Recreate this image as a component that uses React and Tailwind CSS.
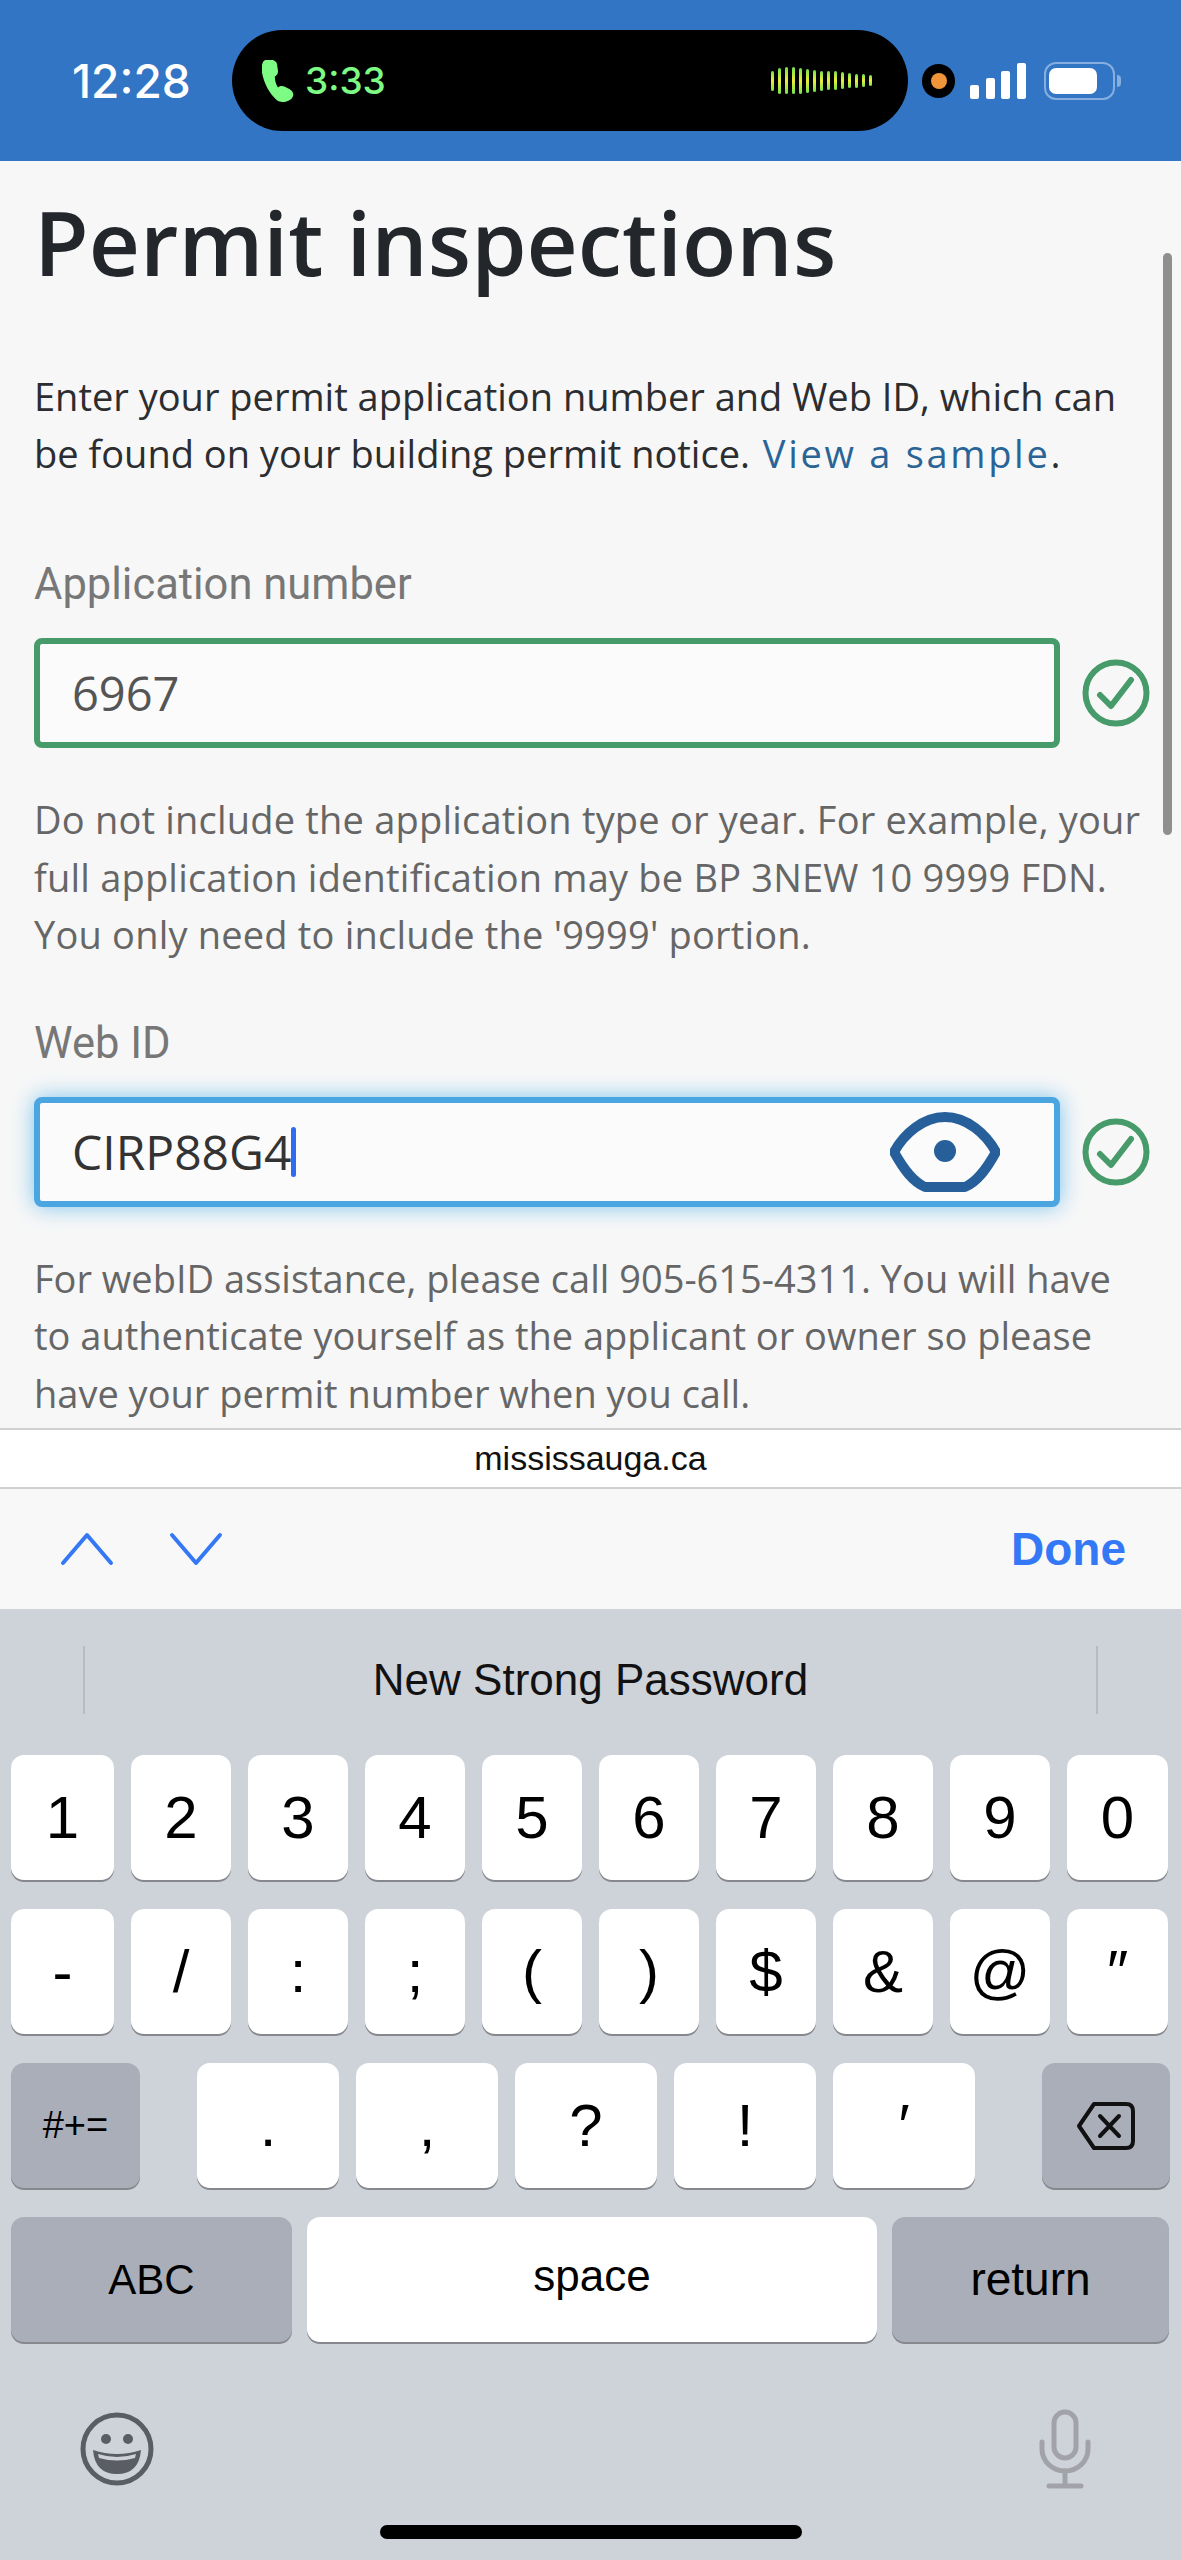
const Check = () => (
  <svg width="68" height="68" viewBox="0 0 68 68" fill="none" className="shrink-0">
    <circle cx="34" cy="34" r="30.5" stroke="#479a69" strokeWidth="6" />
    <path d="M18 36 L29 47 L49 21" stroke="#479a69" strokeWidth="6" strokeLinecap="round" strokeLinejoin="round" />
  </svg>
);

const Eye = () => (
  <svg width="110" height="80" viewBox="0 0 110 80" fill="none">
    <path d="M4 40 C14 22 33 5 55 5 C77 5 96 22 106 40 C96 58 87 70 75 75 L35 75 C23 70 14 58 4 40 Z" stroke="#265f9a" strokeWidth="10" strokeLinejoin="round" />
    <circle cx="55" cy="39" r="11" fill="#265f9a" />
  </svg>
);

const Wave = () => {
  const hs = [20, 26, 27, 27, 26, 24, 22, 20, 19, 19, 17, 15, 14, 13, 11];
  return (
    <div className="flex items-center gap-[3.5px]">
      {hs.map((h, i) => (
        <div key={i} className="w-[3.5px] rounded-full bg-gradient-to-b from-[#6fe04a] via-[#e6ee3a] to-[#6fe04a]" style={{ height: h }} />
      ))}
    </div>
  );
};

const StatusBar = () => (
  <div className="flex h-[161px] items-center bg-[#3375c5] pl-[72px] font-['Inter',sans-serif]">
    <span className="w-[160px] text-[46px] font-medium leading-none text-white">12:28</span>
    <div className="flex h-[101px] w-[676px] items-center rounded-full bg-black pl-[30px] pr-[36px]">
      <svg width="32" height="42" viewBox="0 0 30 46" preserveAspectRatio="none" className="mr-[11px]">
        <path d="M3 0 C0 2 -1 7 0 14 C2 26 7 37 14 44 C18 47 24 47 28 42 C30 39 30 35 26 32 L21 29 C19 28 17 28 15 30 C13 27 12 22 12 18 C14 17 15 15 15 12 L14 4 C13 0 7 -2 3 0 Z" fill="#7efb84" />
      </svg>
      <span className="text-[37px] font-medium leading-none text-[#7efb84]">3:33</span>
      <div className="ml-auto"><Wave /></div>
    </div>
    <div className="ml-[14px] flex h-[34px] w-[33px] items-center justify-center rounded-full bg-black">
      <div className="h-[16px] w-[16px] rounded-full bg-[#f0953a]" />
    </div>
    <div className="ml-[15px] flex items-end gap-[6.5px]">
      <div className="h-[14px] w-[9px] rounded-[2px] bg-white" />
      <div className="h-[21px] w-[9px] rounded-[2px] bg-white" />
      <div className="h-[28px] w-[9px] rounded-[2px] bg-white" />
      <div className="h-[36px] w-[9px] rounded-[2px] bg-white" />
    </div>
    <div className="ml-[18px] flex items-center">
      <div className="flex h-[38px] w-[71px] items-center rounded-[12px] border-2 border-[#86aede] p-[3px]">
        <div className="h-[26px] w-[48px] rounded-[7px] bg-white" />
      </div>
      <div className="ml-[2px] h-[12px] w-[4px] rounded-r-full bg-[#86aede]" />
    </div>
  </div>
);

const Help = ({ children, className = '' }) => (
  <p className={`mt-[43px] whitespace-nowrap text-[38px] leading-[57.5px] text-[#666666] ${className}`}>{children}</p>
);

const Label = ({ children, className = '' }) => (
  <div className={`h-[50px] font-['Roboto',sans-serif] text-[43.5px] leading-[50px] text-[#777777] ${className}`}>{children}</div>
);

const Main = () => (
  <div className="relative h-[1267px] overflow-hidden bg-[#f7f7f7] pl-[34px] pr-[20px] pt-[21px] font-['Open_Sans',sans-serif]">
    <h1 className="h-[120px] text-[89px] font-semibold leading-[120px] text-[#23272b]">Permit inspections</h1>
    <p className="mt-[66px] whitespace-nowrap text-[38px] leading-[57px] text-[#2b2d30]">
      Enter your permit application number and Web ID, which can<br />
      be found on your building permit notice. <span className="ml-[3px] tracking-[2.7px] text-[#2a6496]">View a sample</span>.
    </p>
    <Label className="mt-[78px]">Application number</Label>
    <div className="mt-[28px] flex items-center gap-[22px]">
      <div className="flex h-[110px] w-[1026px] items-center rounded-[8px] border-[6px] border-[#479a69] bg-[#fbfbfb] pl-[32px] text-[47px] text-[#555555]">
        6967
      </div>
      <Check />
    </div>
    <Help className="tracking-[0.2px]">
      Do not include the application type or year. For example, your<br />
      full application identification may be BP 3NEW 10 9999 FDN.<br />
      You only need to include the '9999' portion.
    </Help>
    <Label className="mt-[55px]">Web ID</Label>
    <div className="mt-[28px] flex items-center gap-[22px]">
      <div className="flex h-[110px] w-[1026px] items-center rounded-[8px] border-[6px] border-[#4aa5e0] bg-[#fbfbfb] pl-[32px] pr-[54px] text-[48px] text-[#333333] shadow-[0_0_22px_#7cc4ee]">
        <span>CIRP88G4</span>
        <span className="h-[50px] w-[5px] rounded-full bg-[#2f6cf0]" />
        <span className="ml-auto"><Eye /></span>
      </div>
      <Check />
    </div>
    <Help>
      For webID assistance, please call 905-615-4311. You will have<br />
      to authenticate yourself as the applicant or owner so please<br />
      have your permit number when you call.
    </Help>
    <div className="absolute right-[9px] top-[92px] h-[582px] w-[9px] rounded-full bg-[#8f8f8f]" />
  </div>
);

const Bars = () => (
  <>
    <div className="flex h-[61px] items-center justify-center border-y-2 border-[#d0d0d0] bg-white font-['Liberation_Sans',sans-serif] text-[34px] text-[#111111]">
      mississauga.ca
    </div>
    <div className="flex h-[120px] items-center bg-[#f8f8f8] pl-[60px] pr-[55px] font-['Liberation_Sans',sans-serif]">
      <svg width="54" height="34" viewBox="0 0 54 34" fill="none">
        <path d="M3 31 L27 3 L51 31" stroke="#3478f6" strokeWidth="4" strokeLinecap="round" strokeLinejoin="round" />
      </svg>
      <svg width="54" height="34" viewBox="0 0 54 34" fill="none" className="ml-[55px]">
        <path d="M3 3 L27 31 L51 3" stroke="#3478f6" strokeWidth="4" strokeLinecap="round" strokeLinejoin="round" />
      </svg>
      <span className="ml-auto text-[46px] font-bold text-[#3478f6]">Done</span>
    </div>
  </>
);

const Key = ({ children, dark = false, className = '', textClass = 'text-[60px]' }) => (
  <div className={`flex h-[125px] items-center justify-center rounded-[13px] text-black shadow-[0_2px_0_#86888d] ${dark ? 'bg-[#a9aeb9]' : 'bg-white'} ${textClass} ${className}`}>
    {children}
  </div>
);

const Backspace = () => (
  <svg width="60" height="50" viewBox="0 0 60 50" fill="none">
    <path d="M18 3 H50 Q57 3 57 10 V40 Q57 47 50 47 H18 L3 25 Z" stroke="#111" strokeWidth="4" strokeLinejoin="round" />
    <path d="M24 15 L43 35 M43 15 L24 35" stroke="#111" strokeWidth="4" strokeLinecap="round" />
  </svg>
);

const Smile = () => (
  <svg width="74" height="74" viewBox="0 0 74 74" fill="none">
    <circle cx="37" cy="37" r="34" stroke="#5a5d64" strokeWidth="5" />
    <circle cx="26" cy="27" r="5" fill="#5a5d64" />
    <circle cx="48" cy="27" r="5" fill="#5a5d64" />
    <path d="M13 38 Q37 46 61 38 Q59 62 37 62 Q15 62 13 38 Z" fill="#5a5d64" />
    <path d="M18 42 Q37 48 56 42 L55 46 Q37 51 19 46 Z" fill="#ced1d9" />
  </svg>
);

const Mic = () => (
  <svg width="52" height="80" viewBox="0 0 52 80" fill="none">
    <rect x="15" y="3" width="22" height="46" rx="11" stroke="#a1a3a8" strokeWidth="5" />
    <path d="M3 33 V40 C3 52 13 62 26 62 C39 62 49 52 49 40 V33" stroke="#a1a3a8" strokeWidth="5" strokeLinecap="round" />
    <path d="M26 62 V76 M10 77 H42" stroke="#a1a3a8" strokeWidth="5" strokeLinecap="round" />
  </svg>
);

const Keyboard = () => (
  <div className="h-[951px] bg-[#ced2d9] font-['Liberation_Sans',sans-serif]">
    <div className="flex h-[146px] items-start px-[83px] pt-[37px]">
      <div className="h-[68px] w-[2px] bg-[#b8bbc1]" />
      <div className="flex h-[68px] flex-1 items-center justify-center text-[44px] text-[#111111]">New Strong Password</div>
      <div className="h-[68px] w-[2px] bg-[#b8bbc1]" />
    </div>
    <div className="flex flex-col gap-[29px] px-[11px]">
      <div className="grid grid-cols-[103px_repeat(8,100px)_101px] gap-[17px]">
        {['1', '2', '3', '4', '5', '6', '7', '8', '9', '0'].map((k) => <Key key={k}>{k}</Key>)}
      </div>
      <div className="grid grid-cols-[103px_repeat(8,100px)_101px] gap-[17px]">
        {['-', '/', ':', ';', '(', ')', '$', '&', '@', '″'].map((k) => <Key key={k}>{k}</Key>)}
      </div>
      <div className="flex">
        <Key dark className="w-[129px]" textClass="text-[38px]">#+=</Key>
        <div className="ml-[57px] flex gap-[17px]">
          {['.', ',', '?', '!', '′'].map((k) => <Key key={k} className="w-[142px]">{k}</Key>)}
        </div>
        <Key dark className="ml-auto w-[128px]"><Backspace /></Key>
      </div>
      <div className="flex gap-[15px]">
        <Key dark className="w-[281px]" textClass="text-[42px]">ABC</Key>
        <Key className="w-[570px] pb-[8px]" textClass="text-[44px]">space</Key>
        <Key dark className="w-[277px]" textClass="text-[46px]">return</Key>
      </div>
    </div>
    <div className="mt-[67px] flex items-center justify-between pl-[80px] pr-[90px]">
      <Smile />
      <Mic />
    </div>
    <div className="mx-auto mt-[36px] h-[14px] w-[422px] rounded-full bg-black" />
  </div>
);

export default function App() {
  return (
    <div className="h-[2560px] w-[1181px] overflow-hidden">
      <StatusBar />
      <Main />
      <Bars />
      <Keyboard />
    </div>
  );
}
